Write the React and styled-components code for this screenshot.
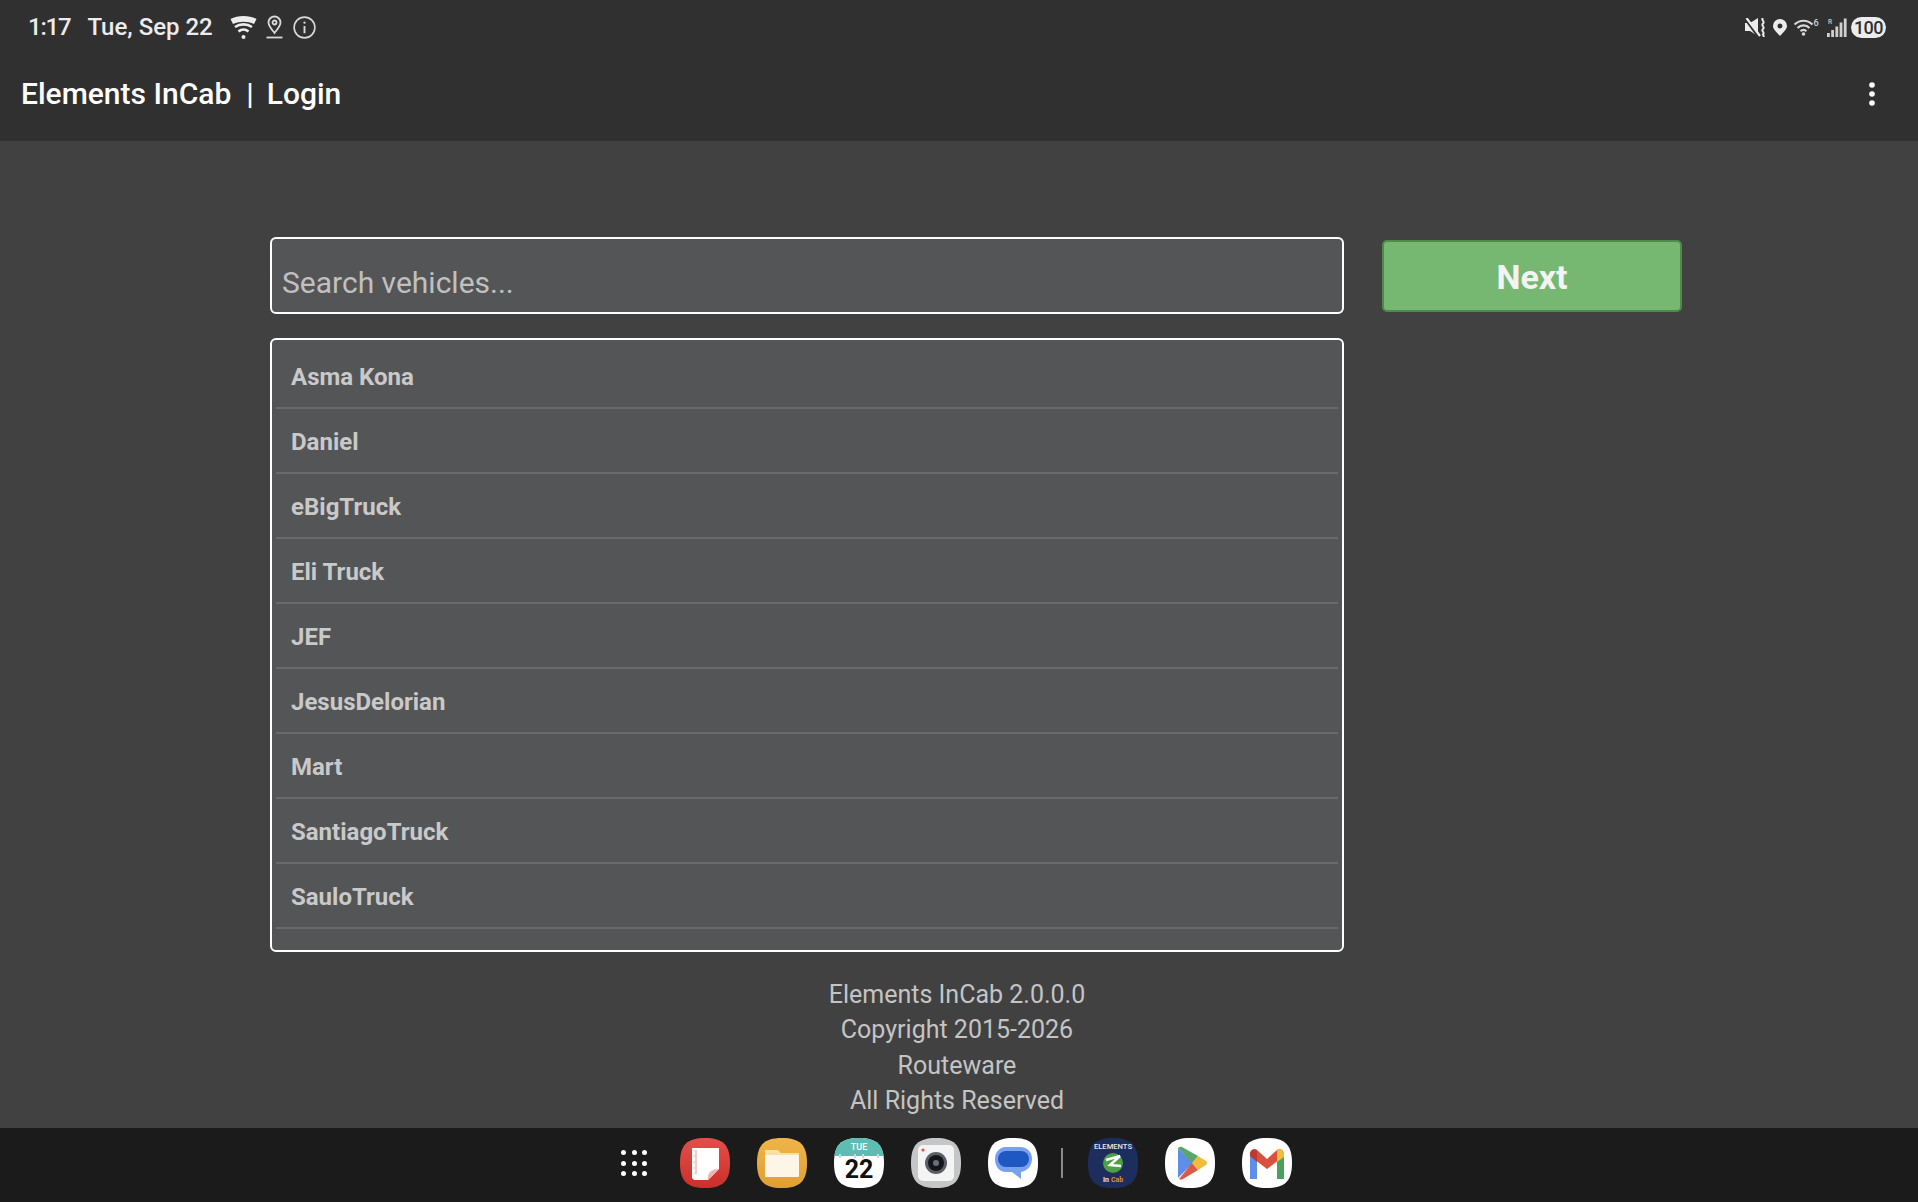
import React from "react";
import styled, { createGlobalStyle } from "styled-components";

const GlobalStyle = createGlobalStyle`
  html, body {
    margin: 0;
    padding: 0;
    background: #1b1b1b;
  }
  * {
    box-sizing: border-box;
  }
`;

const Screen = styled.div`
  width: 1918px;
  height: 1202px;
  display: flex;
  flex-direction: column;
  overflow: hidden;
  background: #414141;
  font-family: Roboto, "Liberation Sans", sans-serif;
`;

const Header = styled.header`
  height: 141px;
  flex: none;
  background: #303030;
  display: flex;
  flex-direction: column;
`;

const StatusBar = styled.div`
  height: 54px;
  padding: 0 32px 0 28px;
  display: flex;
  align-items: center;
  justify-content: space-between;
  color: #ececec;
`;

const StatusGroup = styled.div`
  display: flex;
  align-items: center;
  gap: ${(p) => p.$gap}px;
`;

const StatusText = styled.span`
  font-size: 24px;
  font-weight: 500;
  margin-right: ${(p) => p.$mr || 0}px;
  letter-spacing: ${(p) => (p.$tight ? "-1.2px" : "normal")};
`;

const AppBar = styled.div`
  flex: 1;
  padding: 0 43px 8px 21px;
  display: flex;
  align-items: center;
  justify-content: space-between;
`;

const Title = styled.h1`
  margin: 0;
  font-size: 30px;
  font-weight: 500;
  color: #fff;
`;

const TitleSep = styled.span`
  margin: 0 13px 0 15px;
`;

const Battery = styled.span`
  width: 35px;
  height: 21px;
  margin-left: -3px;
  border-radius: 11px;
  background: #ececec;
  color: #303030;
  font-size: 18px;
  font-weight: 500;
  display: flex;
  align-items: center;
  justify-content: center;
  letter-spacing: -0.5px;
`;

const Main = styled.main`
  flex: 1;
  min-height: 0;
  padding: 96px 236px 0 270px;
  display: flex;
  flex-direction: column;
`;

const Columns = styled.div`
  display: flex;
  align-items: flex-start;
  gap: 38px;
`;

const LeftColumn = styled.div`
  width: 1074px;
  display: flex;
  flex-direction: column;
  gap: 24px;
`;

const SearchBox = styled.div`
  height: 77px;
  border: 2px solid #fff;
  border-radius: 6px;
  background: #545557;
  padding: 14px 10px 0;
  display: flex;
  align-items: center;
  color: #c0c0c0;
  font-size: 30px;
`;

const NextButton = styled.button`
  width: 300px;
  height: 72px;
  margin-top: 3px;
  border: 2px solid #4d8a4b;
  border-radius: 5px;
  background: #76b872;
  color: #f3f3f3;
  font-family: inherit;
  font-size: 34px;
  font-weight: 700;
  padding: 2px 0 0;
`;

const VehicleList = styled.div`
  height: 614px;
  border: 2px solid #fff;
  border-radius: 6px;
  background: #545557;
  padding: 4px 4px 0;
  overflow: hidden;
`;

const VehicleRow = styled.div`
  height: 65px;
  border-bottom: 2px solid #686a6c;
  padding: 3px 15px 0;
  display: flex;
  align-items: center;
  color: #c9c9c9;
  font-size: 24px;
  font-weight: 700;
`;

const Footer = styled.footer`
  margin: 25px -236px 0 -274px;
  text-align: center;
  color: #c4c4c4;
  font-size: 25px;
  line-height: 35.4px;
`;

const Dock = styled.nav`
  height: 74px;
  flex: none;
  background: #1b1b1b;
  padding: 0 0 4px 621px;
  display: flex;
  align-items: center;
`;

const DockTile = styled.div`
  width: 50px;
  height: 50px;
  flex: none;
  margin-right: ${(p) => (p.$mr === undefined ? 27 : p.$mr)}px;
`;

const DockDivider = styled.div`
  width: 2px;
  height: 30px;
  flex: none;
  margin-right: 25px;
  background: #8a8a8a;
`;

const AppsGrid = styled.div`
  width: 26px;
  height: 26px;
  flex: none;
  margin-right: 33px;
  display: grid;
  grid-template-columns: repeat(3, 5px);
  justify-content: space-between;
  align-content: space-between;
`;

const AppsDot = styled.span`
  width: 5px;
  height: 5px;
  border-radius: 50%;
  background: #fff;
`;

const vehicles = [
  "Asma Kona",
  "Daniel",
  "eBigTruck",
  "Eli Truck",
  "JEF",
  "JesusDelorian",
  "Mart",
  "SantiagoTruck",
  "SauloTruck",
];

const squircle = "M25 0C43 0 50 7 50 25C50 43 43 50 25 50C7 50 0 43 0 25C0 7 7 0 25 0Z";

const Tile = ({ children, fill, fillTo, mr, clipId }) => (
  <DockTile $mr={mr}>
    <svg width="50" height="50" viewBox="0 0 50 50">
      <defs>
        <clipPath id={clipId}>
          <path d={squircle} />
        </clipPath>
        <linearGradient id={`${clipId}-bg`} x1="0" y1="0" x2="0" y2="1">
          <stop offset="0" stopColor={fill} />
          <stop offset="1" stopColor={fillTo || fill} />
        </linearGradient>
      </defs>
      <path d={squircle} fill={`url(#${clipId}-bg)`} />
      <g clipPath={`url(#${clipId})`}>{children}</g>
    </svg>
  </DockTile>
);

const WifiIcon = () => (
  <svg width="27" height="26" viewBox="0 0 27 26" fill="none" stroke="#ececec">
    <path d="M0.5 5C8 1 19 1 26.5 5L24 10C17 7 10 7 3 10Z" fill="#ececec" stroke="none" />
    <path d="M5 13C10 9.5 17 9.5 22 13" strokeWidth="2.6" />
    <path d="M8.5 17.5C11.5 15 15.5 15 18.5 17.5" strokeWidth="2.6" />
    <circle cx="13.5" cy="23" r="2" fill="#ececec" stroke="none" />
  </svg>
);

const PinOutlineIcon = () => (
  <svg width="18" height="24" viewBox="0 0 18 24" fill="none" stroke="#d8d8d8" strokeWidth="1.8">
    <path d="M8.5 18C5 13.5 2.5 11 2.5 7.5A6 6 0 0 1 14.5 7.5C14.5 11 12 13.5 8.5 18Z" />
    <circle cx="8.5" cy="7.5" r="2" />
    <path d="M0.5 22.5H16.5" />
  </svg>
);

const InfoIcon = () => (
  <svg width="23" height="23" viewBox="0 0 24 24" fill="none" stroke="#d8d8d8" strokeWidth="1.7">
    <circle cx="12" cy="12" r="10.8" />
    <path d="M12 10.5V18" strokeWidth="2" />
    <circle cx="12" cy="7" r="1.2" fill="#d8d8d8" stroke="none" />
  </svg>
);

const MuteIcon = () => (
  <svg width="21" height="19" viewBox="0 0 21 19" fill="none">
    <path d="M0 5H5L13 0V18L5 13H0Z" fill="#ececec" />
    <path d="M0 0L14 19" stroke="#303030" strokeWidth="3.2" />
    <path d="M1.5 0L15 18" stroke="#ececec" strokeWidth="2.2" />
    <path d="M18 0C15.5 2 20.5 3.5 18 5.5C15.5 7.5 20.5 9 18 11C15.5 13 20.5 14.5 18 16.5L19 19" stroke="#ececec" strokeWidth="2" />
  </svg>
);

const PinIcon = () => (
  <svg width="14" height="17" viewBox="0 0 14 17">
    <path fillRule="evenodd" d="M7 17C3 12.5 0 10 0 7A7 7 0 0 1 14 7C14 10 11 12.5 7 17ZM7 4.5A2.5 2.5 0 1 0 7 9.5A2.5 2.5 0 0 0 7 4.5Z" fill="#ececec" />
  </svg>
);

const WifiSixIcon = () => (
  <svg width="26" height="18" viewBox="0 0 26 18" fill="none" stroke="#d8d8d8" strokeWidth="2.2">
    <path d="M0.5 6.5C6 1.5 13 1.5 18.5 6.5" />
    <path d="M3.5 10C7 6.5 12 6.5 15.5 10" />
    <path d="M6.5 13.2C8.5 11.5 10.5 11.5 12.5 13.2" />
    <circle cx="9.5" cy="16" r="1.8" fill="#d8d8d8" stroke="none" />
    <text x="19.5" y="8" fontSize="9" fontFamily="Roboto" fontWeight="500" fill="#d8d8d8" stroke="none">6</text>
  </svg>
);

const SignalIcon = () => (
  <svg width="20" height="19" viewBox="0 0 20 19" fill="#cfcfcf">
    <text x="1" y="6" fontSize="6.5" fontFamily="Roboto" fontWeight="500">R</text>
    <rect x="0" y="15" width="2.8" height="4" />
    <rect x="4.2" y="12" width="2.8" height="7" />
    <rect x="8.4" y="8.5" width="2.8" height="10.5" />
    <rect x="12.6" y="4.5" width="2.8" height="14.5" />
    <rect x="16.8" y="0.5" width="2.8" height="18.5" />
  </svg>
);

const MoreIcon = () => (
  <svg width="6" height="24" viewBox="0 0 6 24" fill="#fff">
    <circle cx="3" cy="3" r="2.8" />
    <circle cx="3" cy="12" r="2.8" />
    <circle cx="3" cy="21" r="2.8" />
  </svg>
);

export default function App() {
  return (
    <Screen>
      <GlobalStyle />
      <Header>
        <StatusBar>
          <StatusGroup $gap={9}>
            <StatusText $tight $mr={8}>1:17</StatusText>
            <StatusText $mr={8}>Tue, Sep 22</StatusText>
            <WifiIcon />
            <PinOutlineIcon />
            <InfoIcon />
          </StatusGroup>
          <StatusGroup $gap={7}>
            <MuteIcon />
            <PinIcon />
            <WifiSixIcon />
            <SignalIcon />
            <Battery>100</Battery>
          </StatusGroup>
        </StatusBar>
        <AppBar>
          <Title>
            Elements InCab<TitleSep>|</TitleSep>Login
          </Title>
          <MoreIcon />
        </AppBar>
      </Header>
      <Main>
        <Columns>
          <LeftColumn>
            <SearchBox>Search vehicles...</SearchBox>
            <VehicleList>
              {vehicles.map((name) => (
                <VehicleRow key={name}>{name}</VehicleRow>
              ))}
            </VehicleList>
          </LeftColumn>
          <NextButton>Next</NextButton>
        </Columns>
        <Footer>
          <div>Elements InCab 2.0.0.0</div>
          <div>Copyright 2015-2026</div>
          <div>Routeware</div>
          <div>All Rights Reserved</div>
        </Footer>
      </Main>
      <Dock>
        <AppsGrid>
          {Array.from({ length: 9 }).map((_, i) => (
            <AppsDot key={i} />
          ))}
        </AppsGrid>
        <Tile fill="#e44e4a" fillTo="#c9302b" clipId="notes">
          <path d="M12 10H39V31L28 42H14L12 40Z" fill="#fff" />
          <path d="M28 42C27 35 31 31 39 31Z" fill="#eeb4b1" />
          <path d="M12 12a3 3 0 0 1 0 6a3 3 0 0 1 0 6a3 3 0 0 1 0 6a3 3 0 0 1 0 6L17 36V12Z" fill="#f5cdcb" />
        </Tile>
        <Tile fill="#efb548" fillTo="#e09f35" clipId="files">
          <path d="M8 12H21L24 15H42V39H8Z" fill="#f8dfa4" />
          <path d="M8 17H42V37Q42 39 40 39H10Q8 39 8 37Z" fill="#fdf6e6" />
        </Tile>
        <Tile fill="#fff" clipId="calendar">
          <rect width="50" height="18" fill="#5dbdb3" />
          <path d="M5 16h2v4h-2zM20 16h2v4h-2zM28 16h2v4h-2zM43 16h2v4h-2z" fill="#b5e3de" />
          <text x="25" y="12" textAnchor="middle" fontSize="9" fontWeight="500" fontFamily="Roboto" fill="#fff">TUE</text>
          <text x="25" y="40" textAnchor="middle" fontSize="25" fontWeight="700" fontFamily="Roboto" fill="#111">22</text>
        </Tile>
        <Tile fill="#c4c6c8" clipId="camera">
          <rect x="7" y="7" width="36" height="36" rx="5" fill="#f4f4f4" />
          <circle cx="12" cy="12" r="1.6" fill="#d9534f" />
          <circle cx="25" cy="25" r="11" fill="#5b5e66" />
          <circle cx="25" cy="25" r="8" fill="#15161a" />
          <circle cx="25" cy="25" r="3" fill="#6b7078" />
        </Tile>
        <Tile fill="#fff" mr={23} clipId="messages">
          <path d="M18 9H32C40 9 44 15 44 21C44 28 39 33 33 34V41L24 34H18C11 34 7 28 7 21C7 15 11 9 18 9Z" fill="#78a0f4" />
          <rect x="10" y="13" width="31" height="16" rx="8" fill="#1f57c3" />
        </Tile>
        <DockDivider />
        <Tile fill="#1c2d5e" clipId="incab">
          <text x="25" y="11" textAnchor="middle" fontSize="7.6" fontFamily="Roboto" fontWeight="500" fill="#e6e6e6">ELEMENTS</text>
          <circle cx="25" cy="25" r="10" fill="#4c9f45" />
          <path d="M18 22L32 18L22 27L33 28" fill="none" stroke="#fff" strokeWidth="2.4" />
          <text x="15" y="44" fontSize="7" fontFamily="Roboto" fontWeight="700" fill="#e6e6e6">In</text>
          <text x="23" y="44" fontSize="7" fontFamily="Roboto" fontWeight="700" fill="#d9952b">Cab</text>
        </Tile>
        <Tile fill="#fff" clipId="play">
          <path d="M13 10V40L28 25Z" fill="#5e8fe8" />
          <path d="M14 41Q16 42 18 41L33 32L27 25Z" fill="#dc5846" />
          <path d="M33 18L41 23Q43 25 41 27L33 32L27 25Z" fill="#f1bb3b" />
          <path d="M17 9L33 18L27 25L13 10Q15 8 17 9Z" fill="#5aa66a" />
        </Tile>
        <Tile fill="#fff" mr={0} clipId="gmail">
          <path d="M8 16V41H15V22Z" fill="#5e8fe8" />
          <path d="M35 22V41H42V16Z" fill="#4ba15c" />
          <path d="M8 16C8 12 12 10 15 12L25 21L35 12C38 10 42 12 42 16V18L25 31L8 18Z" fill="#d9503f" />
          <path d="M35 12C38 10 42 12 42 16V19L35 24Z" fill="#f1bb3b" />
          <path d="M8 16C8 12 12 10 15 12V24L8 18Z" fill="#b83c32" />
        </Tile>
      </Dock>
    </Screen>
  );
}
